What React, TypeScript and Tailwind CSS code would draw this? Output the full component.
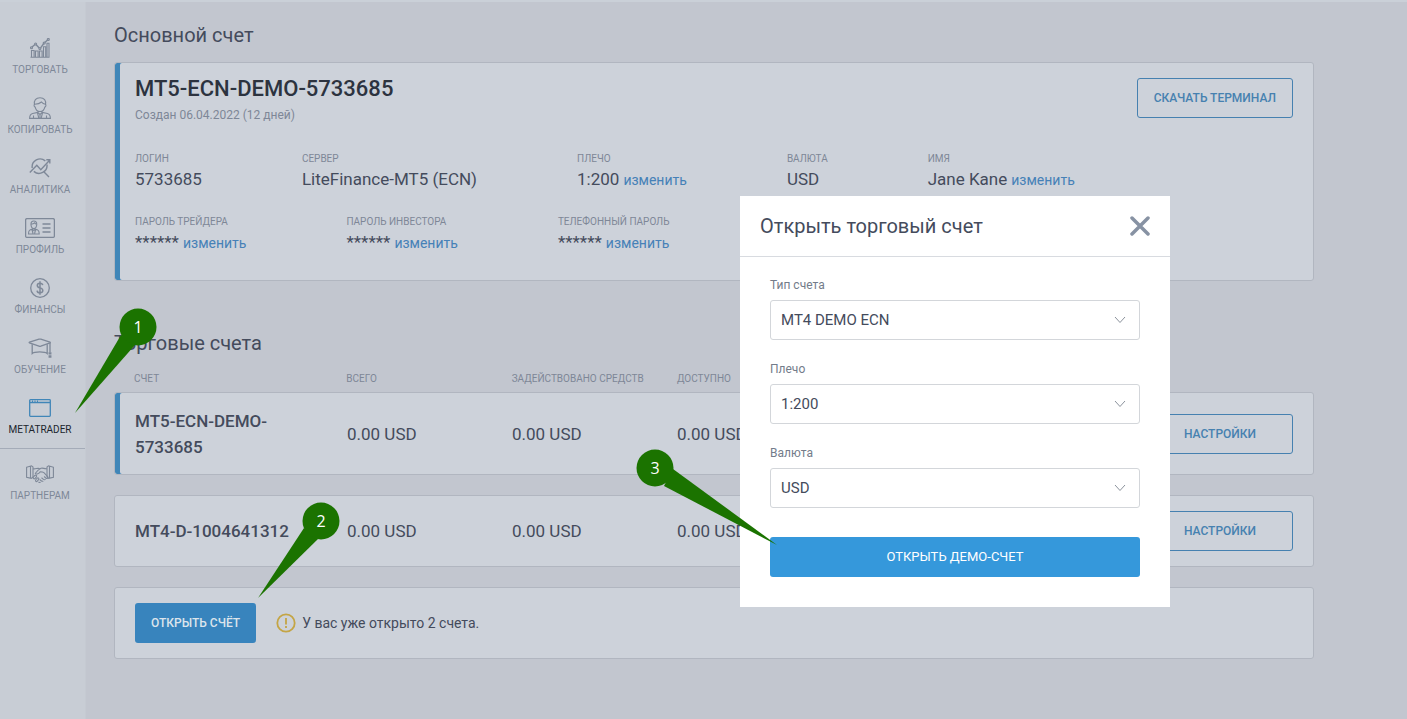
import type { ReactNode } from "react";

const menu: { label: string; icon: ReactNode; active?: boolean }[] = [
  {
    label: "Торговать",
    icon: (
      <svg width="20" height="20" viewBox="0 0 20 20" strokeWidth="1.100">
        <path d="M1.500 19.300v-6.800h2.600v6.800M5.500 19.300v-6.300h2.600v6.300M9.500 19.300v-6.300h2.600v6.300M13.500 19.300V8.800h2.200v10.500M17 19.300V5.200h2v14.100M0.500 19.300h19" />
        <path d="M2 9l3-2.500M6.200 6.800l3 3.200M10.600 9.800l3.200-4.300M14.800 4.500l2.800-2.600" strokeWidth="1.400" />
        <circle cx="1.500" cy="9.800" r="1" />
        <circle cx="5.600" cy="6" r="1" />
        <circle cx="9.900" cy="10.500" r="1" />
        <circle cx="14.200" cy="5" r="1" />
        <circle cx="18.300" cy="1.400" r="1" />
      </svg>
    ),
  },
  {
    label: "Копировать",
    icon: (
      <svg width="22" height="22" viewBox="0 0 22 22" strokeWidth="1.100">
        <path d="M5.500 8C4.500 3.500 7 0.800 11 0.800S17.500 3.500 16.500 8M5.700 7.200c3.300 0 5.300-.8 6.800-2.200 1 1.300 2.300 2 3.900 2.200" />
        <path d="M5.700 7.500c-1 .2-.8 2.200.5 2.600.6 2.900 2.700 4.400 4.800 4.400s4.200-1.500 4.800-4.400c1.300-.4 1.500-2.400.5-2.600M8.700 13.800v1.800M13.300 13.800v1.800" />
        <path d="M0.600 21.400c0-3.300.8-4.300 3-4.900l5.100-1.100 2.300 2 2.300-2 5.100 1.100c2.200.6 3 1.600 3 4.900zM8.500 15.800l1.300 5.400M13.500 15.800l-1.300 5.400M4.500 18.500v2.700M17.500 18.500v2.700M11 17.500v3.500" />
      </svg>
    ),
  },
  {
    label: "Аналитика",
    icon: (
      <svg width="22" height="20" viewBox="0 0 22 20" strokeWidth="1.400">
        <path d="M0.800 14.500L7.800 7.200l4 4.500 8.800-9.500M17.300 1.700h3.500v3.800" />
        <path d="M16.300 2.900A8 8 0 0 0 3.200 10M4.800 13.400A8 8 0 0 0 18 6.500M15.300 14.300l4.700 4.700" />
      </svg>
    ),
  },
  {
    label: "Профиль",
    icon: (
      <svg width="30" height="20" viewBox="0 0 30 20" strokeWidth="1.100">
        <rect x="0.600" y="0.600" width="28.800" height="18.800" rx="1.500" strokeWidth="1.300" />
        <path d="M6 6.500C5.700 4.200 7 3 8.800 3s3.200 1.200 2.900 3.500M6 6.200c2 0 3-.6 3.600-1.300.5.700 1.200 1.100 2.100 1.300" />
        <path d="M6 6.300c0 3 1.300 4.200 2.800 4.200s2.900-1.200 2.900-4.200M3.500 16c0-3.500 1-4.200 3.800-4.900l1.500 1.300 1.500-1.300c2.800.7 3.900 1.400 3.900 4.900zM7 11.500l1 4M10.600 11.500l-1 4" />
        <path d="M17.500 6h8M17.500 10h8M17.500 14h8" strokeWidth="1.300" />
      </svg>
    ),
  },
  {
    label: "Финансы",
    icon: (
      <svg width="20" height="20" viewBox="0 0 20 20" strokeWidth="1.300">
        <circle cx="10" cy="10" r="9.300" />
        <path d="M12.700 7.200c-.2-1.300-1.200-2-2.700-2s-2.700.8-2.700 2.200c0 3.300 5.500 1.700 5.500 5.100 0 1.400-1.200 2.300-2.800 2.300s-2.800-.8-2.900-2.200M10 3.300v13.400" strokeWidth="1.500" />
      </svg>
    ),
  },
  {
    label: "Обучение",
    icon: (
      <svg width="24" height="20" viewBox="0 0 24 20" strokeWidth="1.300">
        <path d="M1.500 4.200L11 1.200q.9-.3 1.800 0L22 4.200q.7.300 0 .7L12.800 8.200q-.9.300-1.800 0L1.500 4.900q-.7-.4 0-.7z" />
        <path d="M4.200 6.200v9.300c2.200-2.300 12.800-2.300 15 0V6.200M22 5v9.300" />
        <path d="M21.200 14.800h1.600v1h-1.600zM21.200 17.800h1.600v1.200h-1.600z" />
      </svg>
    ),
  },
  {
    label: "Metatrader",
    active: true,
    icon: (
      <svg width="22" height="18" viewBox="0 0 22 18" strokeWidth="1.300">
        <rect x="0.700" y="0.700" width="20.600" height="16.600" rx="0.800" />
        <path d="M1 3.500h20M3 2.100h1M5.500 2.100h1M8 2.100h1" />
      </svg>
    ),
  },
];

const partners = (
  <svg width="28" height="19" viewBox="0 0 28 19" strokeWidth="1.100">
    <path d="M0.600 2.300L5.500 0.800 7 2v10l-1.700 1.400L0.600 12.300zM27.400 2.300L22.500 0.800 21 2v10l1.700 1.400 4.700-1.100zM4.500 1.500v11.300M23.500 1.500v11.300" />
    <path d="M7 3.800c2.300.5 3.500-.6 5.300-.6L14.500 4M21 3.700c-2.800.4-4-1.200-6-.4-2.500 1-4.300 3.200-5.600 5 1.300 1.600 3.500.3 4.800-1.600 1.800 0 2.500 0 3.700 1l3.800 4c.8 1-.5 2.300-1.600 1.500l-2-1.700M19.500 14.200c-.4.600-1.400.700-2 .2l-2-1.600M17.200 15.800c-.5.600-1.300.5-2 0l-1.500-1.300M14.500 17.200c-.6.400-1.300.3-2-.2" />
    <path d="M7.300 12.200l1.500-1.700c1-.9 2.300 0 1.700 1.200l-1.500 1.800c-1 .8-2.300-.2-1.700-1.300zM10 14.500l1.200-1.400c1-.7 2.100.2 1.500 1.300l-1.600 2c-1 .8-2.200-.6-1.100-1.900z" />
  </svg>
);

const details = [
  { label: "Логин", value: "5733685" },
  { label: "Сервер", value: "LiteFinance-MT5 (ECN)" },
  { label: "Плечо", value: "1:200", editable: true },
  { label: "Валюта", value: "USD" },
  { label: "Имя", value: "Jane Kane", editable: true },
];

const passwords = [
  { label: "Пароль трейдера", value: "******", editable: true },
  { label: "Пароль инвестора", value: "******", editable: true },
  { label: "Телефонный пароль", value: "******", editable: true },
];

const accounts = [
  { name: "MT5-ECN-DEMO-5733685", row: "min-h-[83px] shadow-[inset_5px_0_0_#4086b8]" },
  { name: "MT4-D-1004641312", row: "min-h-[72px]" },
];

const fields = [
  { id: "type", label: "Тип счета", value: "MT4 DEMO ECN" },
  { id: "leverage", label: "Плечо", value: "1:200" },
  { id: "currency", label: "Валюта", value: "USD" },
];

const card = "rounded-[3px] border border-[#b1b6c0] bg-[#cdd2da]";
const columns = "grid grid-cols-[212fr_165fr_165fr_165fr_451fr] px-5";
const outline = "h-10 rounded-[3px] border border-[#4681b0] text-xs font-medium uppercase text-[#4681b0]";

function MenuItem({ label, icon, active }: { label: string; icon: ReactNode; active?: boolean }) {
  return (
    <li>
      <a href="#" className="flex w-20 flex-col items-center gap-0.5">
        <span className={`flex h-7 items-center fill-none stroke-current ${active ? "text-[#4086b8]" : "text-[#7e8898]"}`}>{icon}</span>
        <span className={`text-[10px] leading-3 uppercase ${active ? "text-[#20252d]" : "text-[#7e8898]"}`}>{label}</span>
      </a>
    </li>
  );
}

function Details({ items }: { items: { label: string; value: string; editable?: boolean }[] }) {
  return (
    <dl className="flex gap-[100px]">
      {items.map((item) => (
        <div key={item.label} className="shrink-0">
          <dt className="text-[10px] leading-4 uppercase text-[#7e8797]">{item.label}</dt>
          <dd className="text-[17px] leading-6">
            {item.value}
            {item.editable && (
              <a href="#" className="ml-1 text-sm text-[#4681b7]">изменить</a>
            )}
          </dd>
        </div>
      ))}
    </dl>
  );
}

function Dialog() {
  return (
    <div role="dialog" aria-labelledby="dialog-title" className="absolute top-[194px] left-[740px] w-[430px] bg-white">
      <div className="flex h-[61px] items-center justify-between border-b border-[#d8dbe0] px-5">
        <h2 id="dialog-title" className="text-xl">Открыть торговый счет</h2>
        <button type="button" aria-label="Закрыть">
          <svg width="20" height="20" viewBox="0 0 20 20" className="stroke-[#8792a3]" strokeWidth="3.500" strokeLinecap="round">
            <path d="M2 2l16 16M18 2L2 18" />
          </svg>
        </button>
      </div>
      <form className="flex flex-col gap-[19px] px-[30px] pt-[18px] pb-[30px]">
        {fields.map((field) => (
          <div key={field.id} className="flex flex-col gap-[5px]">
            <label htmlFor={field.id} className="text-xs leading-5 text-[#737c8a]">{field.label}</label>
            <div className="relative">
              <select id={field.id} className="h-10 w-full appearance-none rounded-[3px] border border-[#d3d6da] bg-white px-2.5 text-[15px]">
                <option>{field.value}</option>
              </select>
              <svg width="12" height="8" viewBox="0 0 12 8" className="pointer-events-none absolute top-4 right-3.5 fill-none stroke-[#8b929c]">
                <path d="M1 1l5 5.500L11 1" />
              </svg>
            </div>
          </div>
        ))}
        <button type="button" className="mt-2.5 h-10 rounded-[3px] bg-[#3598db] text-[13px] uppercase text-white">Открыть демо-счет</button>
      </form>
    </div>
  );
}

function Pin({ step, className, tail }: { step: number; className: string; tail: string }) {
  return (
    <svg width="38" height="38" viewBox="-19 -19 38 38" className={`pointer-events-none absolute overflow-visible fill-[#1b7300] ${className}`}>
      <path d={tail} />
      <circle r="18.500" />
      <text y="6" textAnchor="middle" className="fill-white font-['Open_Sans',sans-serif] text-base">{step}</text>
    </svg>
  );
}

export default function App() {
  return (
    <div className="relative flex min-h-screen overflow-hidden border-t-2 border-[#cad0d8] bg-[#c2c6cf] font-[Roboto,sans-serif] text-[#444b5c]">
      <nav className="w-[86px] shrink-0 border-r border-[#c5cad2] bg-[#c8cdd5] pt-8">
        <ul className="flex flex-col gap-[18px] border-b border-[#a4abb8] pb-3">
          {menu.map((item) => (
            <MenuItem key={item.label} {...item} />
          ))}
        </ul>
        <ul className="pt-[11px]">
          <MenuItem label="Партнерам" icon={partners} />
        </ul>
      </nav>

      <main className="min-w-0 max-w-[1228px] flex-1 pt-[19px] pl-7">
        <h1 className="text-xl">Основной счет</h1>
        <section className={`${card} mt-[13px] px-5 pt-3 pb-[26px] shadow-[inset_5px_0_0_#4086b8]`}>
          <div className="flex items-start justify-between">
            <div>
              <h2 className="text-[22px] leading-7 font-medium text-[#2c333f]">MT5-ECN-DEMO-5733685</h2>
              <p className="mt-0.5 text-xs leading-5 text-[#7e8797]">Создан 06.04.2022 (12 дней)</p>
            </div>
            <button type="button" className={`${outline} mt-[3px] px-4`}>Скачать терминал</button>
          </div>
          <div className="mt-[26px] flex flex-col gap-[23px]">
            <Details items={details} />
            <Details items={passwords} />
          </div>
        </section>

        <h1 className="mt-12 text-xl">Торговые счета</h1>
        <table className="mt-3.5 block w-full text-left">
          <thead className="block">
            <tr className={`${columns} pb-[5px] text-[10px] leading-4 uppercase text-[#7e8797]`}>
              <th className="font-normal">Счет</th>
              <th className="font-normal">Всего</th>
              <th className="font-normal">Задействовано средств</th>
              <th className="font-normal">Доступно</th>
            </tr>
          </thead>
          <tbody className="flex flex-col gap-5">
            {accounts.map((account) => (
              <tr key={account.name} className={`${card} ${columns} ${account.row} items-center text-[17px] leading-[26px]`}>
                <td className="p-0 pr-10 font-medium">{account.name}</td>
                <td className="p-0">0.00 USD</td>
                <td className="p-0">0.00 USD</td>
                <td className="p-0">0.00 USD</td>
                <td className="flex p-0">
                  <button type="button" className={`${outline} ml-auto w-[146px]`}>Настройки</button>
                </td>
              </tr>
            ))}
          </tbody>
        </table>

        <section className={`${card} mt-5 flex h-[72px] items-center px-5`}>
          <button type="button" className="h-10 rounded-[3px] bg-[#3884bd] px-4 text-xs font-medium uppercase text-[#dce4ec]">Открыть счёт</button>
          <svg width="20" height="20" viewBox="0 0 20 20" className="ml-5 fill-none stroke-[#c4a545]" strokeWidth="1.800">
            <circle cx="10" cy="10" r="8.700" />
            <path d="M10 5v6.500M10 13v2" />
          </svg>
          <p className="ml-1.5 text-sm">У вас уже открыто 2 счета.</p>
        </section>
      </main>

      <Dialog />
      <Pin step={1} className="top-[306px] left-[119px]" tail="M-17 8L-63 86L-3 18z" />
      <Pin step={2} className="top-[500px] left-[302px]" tail="M-17 7L-63 77L-3 18z" />
      <Pin step={3} className="top-[447px] left-[636px]" tail="M18 1L122 77L9 18z" />
    </div>
  );
}
